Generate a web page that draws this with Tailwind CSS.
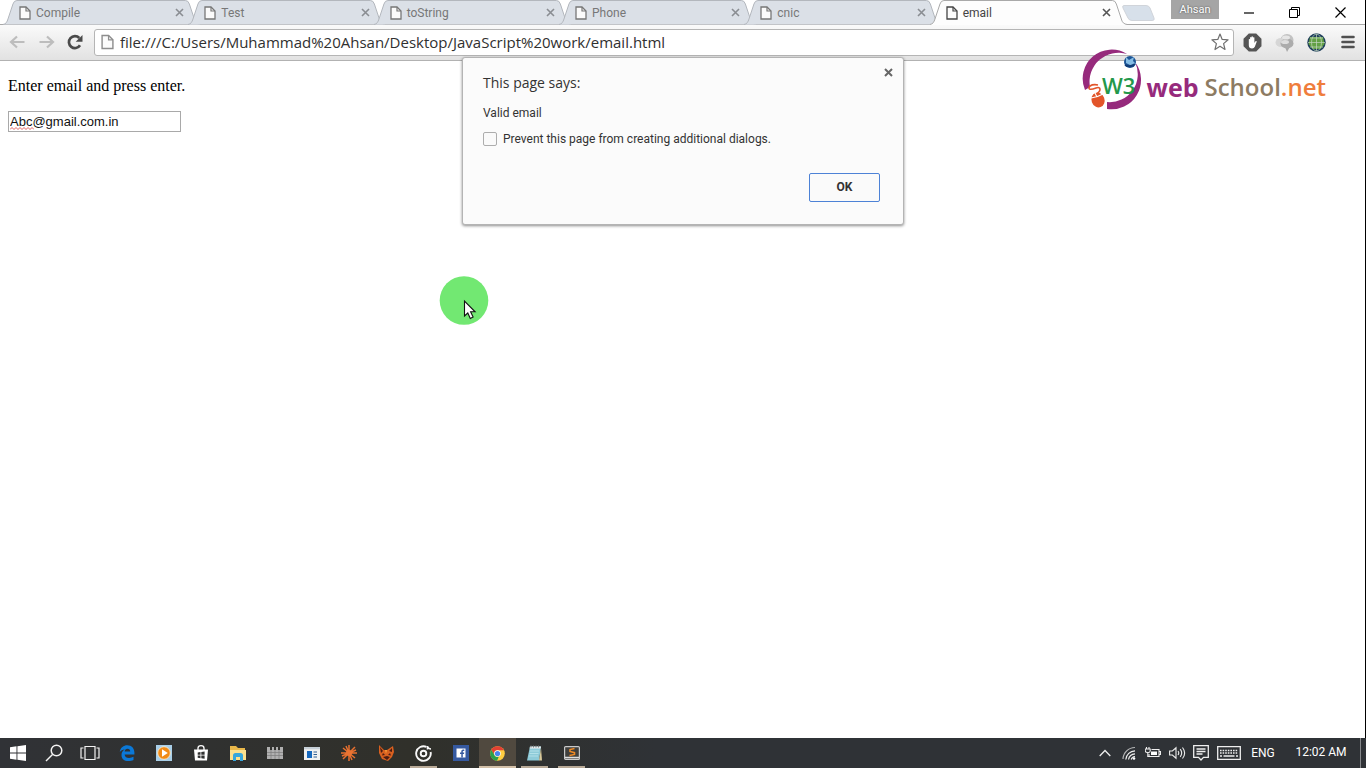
<!DOCTYPE html>
<html lang="en">
<head>
<meta charset="utf-8">
<title>email</title>
<script src="https://cdn.jsdelivr.net/npm/@tailwindcss/browser@4"></script>
</head>
<body class="relative flex h-screen flex-col overflow-hidden bg-white font-['Roboto','Open_Sans',sans-serif] text-[12px] text-[#333]">

<svg class="hidden">
  <symbol id="page" viewBox="0 0 12 14"><path d="M1 1h6l4 4v8H1z" fill="#fbfbfb" stroke="currentColor" stroke-width="1.3"/><path d="M7 1v4h4" fill="none" stroke="currentColor" stroke-width="1.2"/></symbol>
  <symbol id="x" viewBox="0 0 9 9"><path d="M1 1l7 7M8 1l-7 7" stroke="currentColor" stroke-width="1.6"/></symbol>
  <symbol id="tab" viewBox="0 0 198 25" preserveAspectRatio="none"><path d="M0 24.500C3 24 4 22 5 19L10 4Q11 .5 14 .5H183Q186 .5 187 4L192 19Q193 24 198 24.500" fill="#dbe0e7" stroke="#b3b7bd"/></symbol>
  <symbol id="tab-active" viewBox="0 0 198 25" preserveAspectRatio="none"><path d="M0 24.500C3 24 4 22 5 19L10 4Q11 .5 14 .5H183Q186 .5 187 4L192 19Q193 24 198 24.500V26H0z" fill="#fdfdfd"/><path d="M0 24.500C3 24 4 22 5 19L10 4Q11 .5 14 .5H183Q186 .5 187 4L192 19Q193 24 198 24.500" fill="none" stroke="#a9a9a9"/></symbol>
</svg>

<div class="flex min-h-0 flex-1 flex-col border-r border-black">
  <header>
    <div class="flex h-[25px] border-b border-[#a8a8a8] bg-white pr-[2px]">
      <nav class="flex h-[25px] flex-1 pl-[3px] text-[#777]">
        <div class="relative flex flex-1 items-center pl-4 pr-1">
          <svg class="absolute left-0 top-0 h-[25px] w-[calc(100%+12px)]"><use href="#tab"/></svg>
          <svg class="relative mr-[5px] h-[14px] w-3"><use href="#page"/></svg><a href="#" class="relative flex-1">Compile</a>
          <button aria-label="Close Compile" class="relative text-[#8a8d92]"><svg class="size-[9px]"><use href="#x"/></svg></button>
        </div>
        <div class="relative flex flex-1 items-center pl-4 pr-1">
          <svg class="absolute left-0 top-0 h-[25px] w-[calc(100%+12px)]"><use href="#tab"/></svg>
          <svg class="relative mr-[5px] h-[14px] w-3"><use href="#page"/></svg><a href="#" class="relative flex-1">Test</a>
          <button aria-label="Close Test" class="relative text-[#8a8d92]"><svg class="size-[9px]"><use href="#x"/></svg></button>
        </div>
        <div class="relative flex flex-1 items-center pl-4 pr-1">
          <svg class="absolute left-0 top-0 h-[25px] w-[calc(100%+12px)]"><use href="#tab"/></svg>
          <svg class="relative mr-[5px] h-[14px] w-3"><use href="#page"/></svg><a href="#" class="relative flex-1">toString</a>
          <button aria-label="Close toString" class="relative text-[#8a8d92]"><svg class="size-[9px]"><use href="#x"/></svg></button>
        </div>
        <div class="relative flex flex-1 items-center pl-4 pr-1">
          <svg class="absolute left-0 top-0 h-[25px] w-[calc(100%+12px)]"><use href="#tab"/></svg>
          <svg class="relative mr-[5px] h-[14px] w-3"><use href="#page"/></svg><a href="#" class="relative flex-1">Phone</a>
          <button aria-label="Close Phone" class="relative text-[#8a8d92]"><svg class="size-[9px]"><use href="#x"/></svg></button>
        </div>
        <div class="relative flex flex-1 items-center pl-4 pr-1">
          <svg class="absolute left-0 top-0 h-[25px] w-[calc(100%+12px)]"><use href="#tab"/></svg>
          <svg class="relative mr-[5px] h-[14px] w-3"><use href="#page"/></svg><a href="#" class="relative flex-1">cnic</a>
          <button aria-label="Close cnic" class="relative text-[#8a8d92]"><svg class="size-[9px]"><use href="#x"/></svg></button>
        </div>
        <div class="relative flex flex-1 items-center pl-4 pr-1 text-[#444]">
          <svg class="absolute left-0 top-0 h-[25px] w-[calc(100%+12px)]"><use href="#tab-active"/></svg>
          <svg class="relative mr-[5px] h-[14px] w-3"><use href="#page"/></svg><a href="#" class="relative flex-1">email</a>
          <button aria-label="Close email" class="relative text-[#555]"><svg class="size-[9px]"><use href="#x"/></svg></button>
        </div>
      </nav>
      <button aria-label="New tab" class="relative ml-[6px] h-[21px] w-[34px]"><svg class="h-[21px] w-[34px]" viewBox="0 0 34 21"><path d="M3 5.500H25Q28 5.500 29 8L33 18Q34 20.500 31 20.500H11Q8 20.500 7 18L2 8Q1 5.500 3 5.500z" fill="#d7e0ea" stroke="#d0d4da"/></svg></button>
      <button class="ml-4 h-[19px] w-12 bg-[#a5a5a5] text-[11px] leading-[18px] text-white [text-shadow:0_0_2px_#444]">Ahsan</button>
      <div class="ml-[7px] flex text-black">
        <button aria-label="Minimize" class="grid w-[46px] place-items-center"><svg class="size-[11px]" viewBox="0 0 11 11"><path d="M0 6h10" stroke="currentColor" stroke-width="1.2"/></svg></button>
        <button aria-label="Restore" class="grid w-[45px] place-items-center"><svg class="size-[11px]" viewBox="0 0 11 11" fill="none" stroke="currentColor"><path d="M.5 2.500h8v8h-8zM2.500 2.500v-2h8v8h-2"/></svg></button>
        <button aria-label="Close window" class="grid w-[46px] place-items-center"><svg class="size-[11px]" viewBox="0 0 11 11"><path d="M.5.5l10 10M10.500.5l-10 10" stroke="currentColor" stroke-width="1.2"/></svg></button>
      </div>
    </div>

    <div class="flex h-9 items-center border-b border-[#b2b2b2] bg-linear-to-b from-[#fafafa] to-[#e2e2e2] pb-px pl-[9px] pr-[10px]">
      <button aria-label="Back" class="text-[#bdbdbd]"><svg class="h-[14px] w-4" viewBox="0 0 16 14" fill="none" stroke="currentColor" stroke-width="2.200"><path d="M15.500 7H2M8 1.500L2 7l6 5.500"/></svg></button>
      <button aria-label="Forward" class="ml-[14px] text-[#bdbdbd]"><svg class="h-[14px] w-4" viewBox="0 0 16 14" fill="none" stroke="currentColor" stroke-width="2.200"><path d="M.5 7H14M8 1.500L14 7l-6 5.500"/></svg></button>
      <button aria-label="Reload" class="ml-3 text-[#4a4a4a]"><svg class="size-4" viewBox="0 0 16 16"><path d="M13 11.300A6 6 0 1 1 12.300 4" fill="none" stroke="currentColor" stroke-width="2.700"/><path d="M15.500 1v6.800H8.700z" fill="currentColor"/></svg></button>
      <div class="ml-[11px] flex h-[27px] flex-1 items-center rounded-[3px] border border-[#b5b5b5] bg-white pl-[6px] pr-1">
        <svg class="mr-[6px] h-4 w-[13px] text-[#8d8d8d]"><use href="#page"/></svg>
        <input aria-label="Address" class="min-w-0 flex-1 font-['Open_Sans',sans-serif] text-[15px] leading-5 text-[#303030] outline-none" value="file:///C:/Users/Muhammad%20Ahsan/Desktop/JavaScript%20work/email.html">
        <button aria-label="Bookmark"><svg class="size-[18px]" viewBox="0 0 18 18"><path d="M9 1l2.200 5.400 5.900.4-4.500 3.800 1.400 5.900L9 13.300l-5 3.200 1.400-5.900L.9 6.800l5.900-.4z" fill="#fff" stroke="#707070" stroke-width="1.200" stroke-linejoin="round"/></svg></button>
      </div>
      <div class="ml-[9px] flex items-center gap-[13px]">
        <button aria-label="Ad blocker"><svg class="size-[19px]" viewBox="0 0 18 18"><path d="M5.500 .5h7l5 5v7l-5 5h-7l-5-5v-7z" fill="#555"/><path d="M5.500 9.500V6q.6-.8 1.200 0v2.500V4.300q.7-.8 1.300 0v3.500V3.500q.8-.8 1.400 0v4.300V4.300q.8-.7 1.400 0V9.500l1-1.600q1.200-.6 1.200.5l-1.800 4.700q-.7 1.600-2.600 1.600-3 0-3.100-3z" fill="#fff"/></svg></button>
        <button aria-label="Messages"><svg class="size-[19px]" viewBox="0 0 19 19"><ellipse cx="12" cy="7" rx="6.500" ry="6" fill="#c2c2c2"/><path d="M10 14l2 5 4-7z" fill="#a8a8a8"/><ellipse cx="6" cy="9.500" rx="5.500" ry="4.500" fill="#d6d6d6"/><ellipse cx="12" cy="10.500" rx="6.500" ry="5" fill="#acacac"/><ellipse cx="11" cy="4.500" rx="4" ry="2" fill="#e6e6e6"/><ellipse cx="10" cy="9" rx="4" ry="2" fill="#dedede"/></svg></button>
        <button aria-label="Globe"><svg class="size-[19px]" viewBox="0 0 19 19"><circle cx="9.500" cy="9.500" r="9.200" fill="#1f3f5c"/><path d="M3 4h13l1.500 7-4 5h-8l-4-5z" fill="#62a044"/><g fill="none" stroke="#c3d5c0" stroke-width=".7"><path d="M9.500 1v17M1 9.500h17M3 5h13M3 14h13"/><ellipse cx="9.500" cy="9.500" rx="5" ry="8.500"/></g></svg></button>
        <button aria-label="Menu" class="ml-[2px] text-[#505050]"><svg class="h-[14px] w-[14px]" viewBox="0 0 14 14"><path d="M1.500 2h11M1.500 7h11M1.500 12h11" stroke="currentColor" stroke-width="2.600" stroke-linecap="round"/></svg></button>
      </div>
    </div>
  </header>

  <main class="px-2 pt-4">
    <label for="email" class="block font-['Liberation_Serif',serif] text-[16px] leading-[18px] text-black">Enter email and press enter.</label>
    <div class="relative mt-4 w-[173px]">
      <input id="email" class="block h-[21px] w-full border border-[#a9a9a9] px-px font-['Liberation_Sans',sans-serif] text-[13px] text-[#111] outline-none" value="Abc@gmail.com.in" spellcheck="false">
      <svg class="absolute bottom-[2px] left-[2px] h-[3px] w-6" viewBox="0 0 24 3"><path d="M0 2.500l2-2 2 2 2-2 2 2 2-2 2 2 2-2 2 2 2-2 2 2 2-2 2 2" fill="none" stroke="#e05050" stroke-width=".9"/></svg>
    </div>
  </main>
</div>

<section role="dialog" aria-labelledby="says" class="absolute left-1/2 top-[57px] w-[442px] -translate-x-1/2 rounded-[3px] border border-[#b4b4b4] bg-[#fbfbfb] px-5 pb-[22px] pt-4 shadow-[0_1px_3px_rgba(0,0,0,0.45)]">
  <button aria-label="Close dialog" class="absolute right-[10px] top-[10px] text-[#666]"><svg class="size-[9px]" viewBox="0 0 9 9"><path d="M1 1l7 7M8 1l-7 7" stroke="currentColor" stroke-width="2"/></svg></button>
  <h1 id="says" class="font-['Open_Sans',sans-serif] text-[14px] leading-[18px]">This page says:</h1>
  <p class="mt-[13px] leading-4">Valid email</p>
  <label class="mt-[10px] flex items-center leading-4"><input type="checkbox" class="mr-[6px] size-[14px] appearance-none rounded-[2px] border border-[#adadad] bg-[#fafafa]">Prevent this page from creating additional dialogs.</label>
  <div class="mt-[26px] flex justify-end"><button class="mr-[3px] h-[29px] w-[71px] rounded-[2px] border border-[#4d82d6] bg-[#fafafa] pb-px font-bold">OK</button></div>
</section>

<!-- Site watermark -->
<div class="absolute right-[40px] top-[48px] flex items-center">
  <svg class="h-16 w-[66px]" viewBox="0 0 66 64">
    <path d="M4 42A29 29 0 0 1 46 6A29 29 0 0 0 9 39Z" fill="#962a7c"/>
    <path d="M54 14A29.500 29.500 0 0 1 26 61V54A28 28 0 0 0 54 14Z" fill="#962a7c"/>
    <circle cx="49" cy="14" r="6" fill="#1c5596"/><path d="M45 9l3 3 5-3-1 4 3 3-6 1-4-2z" fill="#86bde5"/><path d="M44 17q5 3 10-1" stroke="#123c76" stroke-width="2" fill="none"/>
    <path d="M14 47C21 43 20 38 15 40S6 42 9 38q3-2 8-1" fill="none" stroke="#e2552a" stroke-width="1.600"/>
    <ellipse cx="17" cy="52" rx="6.500" ry="7.500" transform="rotate(-20 17 52)" fill="#e2552a"/><path d="M10 50q7-1 12-4M14 45l2 4" stroke="#fff" stroke-width="1.100" fill="none"/>
    <text x="21" y="46" font-family="Open Sans, sans-serif" font-size="22" font-weight="600" fill="#23984a">W3</text>
  </svg>
  <div class="flex gap-[6px] pt-[14px] font-['Open_Sans',sans-serif] text-[25px] leading-8"><span class="font-bold text-[#962a7c]">web</span><span class="text-[24px] font-semibold text-[#8d7b62]">School<span class="text-[#ef7d3c]">.net</span></span></div>
</div>

<!-- Pointer with highlight -->
<svg class="absolute left-[439px] top-[276px] size-[50px]" viewBox="0 0 50 50"><circle cx="25" cy="24.500" r="24.300" fill="#72e872"/><path d="M25.500 25v15l3.300-3 2.500 5.400 2.800-1.300-2.500-5.300h4.500z" fill="#fff" stroke="#111" stroke-width="1.100"/></svg>

<footer class="flex h-[30px] bg-linear-to-r from-[#303236] from-0% via-[#30302a] via-30% to-[#2f3236] to-48% text-white">
  <button aria-label="Start" class="grid w-9 place-items-center"><svg class="size-4" viewBox="0 0 16 16" fill="#fff"><path d="M0 2.300L6.500 1.300v6.200H0zM7.400 1.200L16 0v7.500H7.400zM0 8.400h6.500v6.300L0 13.700zM7.400 8.400H16V16l-8.600-1.200z"/></svg></button>
  <button aria-label="Search" class="grid w-9 place-items-center"><svg class="size-[18px]" viewBox="0 0 18 18" fill="none" stroke="#f2f2f2" stroke-width="1.500"><circle cx="11.500" cy="6.500" r="5.300"/><path d="M7.500 10.500L1 17"/></svg></button>
  <button aria-label="Task view" class="grid w-9 place-items-center"><svg class="h-4 w-5" viewBox="0 0 20 16" fill="none" stroke="#f2f2f2" stroke-width="1.200"><path d="M5 1.500h10v13H5zM3.500 3H1v10h2.500M16.500 3H19v10h-2.500"/></svg></button>
  <button aria-label="Edge" class="grid w-[37px] place-items-center"><svg class="size-4" viewBox="0 0 16 16"><path d="M.8 7C1.500 2.500 4.600.3 8.200.3c4.600 0 7.200 3.200 7.200 7.200V9.400H5.600c.2 2.500 2 3.500 4.500 3.500 1.700 0 3.200-.4 4.400-1.100v3.100c-1.500.7-3.200 1.100-5.300 1.100-4 0-6.700-2.200-6.700-6.100 0-2.300 1.200-4.300 3.200-5.300C3.600 5 1.800 5.700.8 7zM5.700 6.500h5.500c0-1.600-1-2.700-2.700-2.700S5.900 4.900 5.700 6.500z" fill="#0b78d7"/></svg></button>
  <button aria-label="Media player" class="grid w-[37px] place-items-center"><svg class="size-4" viewBox="0 0 16 16"><path d="M0 0h16v16H0z" fill="#a9cfe8"/><circle cx="8" cy="8" r="6.300" fill="#f18b16" stroke="#fff1d8" stroke-width=".8"/><path d="M6 4.300v7.400L11.800 8z" fill="#fff"/></svg></button>
  <button aria-label="Store" class="grid w-[37px] place-items-center"><svg class="size-4" viewBox="0 0 16 16"><path d="M1 4.500h14l-1 11H2z" fill="#fff"/><path d="M5 5V3q0-2.300 3-2.300T11 3v2" fill="none" stroke="#fff" stroke-width="1.300"/><path d="M4.700 7.400l2.800-.4v2.700H4.700zM8.300 6.900l3.300-.4v3.200H8.300zM4.700 10.500h2.800v2.700l-2.800-.4zM8.300 10.500h3.300v3.300l-3.300-.5z" fill="#303131"/></svg></button>
  <button aria-label="File Explorer" class="grid w-[37px] place-items-center"><svg class="h-4 w-[18px]" viewBox="0 0 18 16"><path d="M1 1h6l2 2h7v4H1z" fill="#e9b84a"/><path d="M1 5h16v10H1z" fill="#fbe08d"/><path d="M4 16V10.500Q4 8 6.500 8h5Q14 8 14 10.500V16h-3v-4H7v4z" fill="#36a6dc"/></svg></button>
  <button aria-label="Keyboard tool" class="grid w-[37px] place-items-center"><svg class="h-[14px] w-4" viewBox="0 0 16 14"><path d="M0 1h3v3h2V1h2v3h2V1h2v3h2V1h3v12H0z" fill="#b0b0b0"/><path d="M0 6.500h16M0 9.500h16M4 4v9M8 4v9M12 4v9" stroke="#7c7c7c" stroke-width=".7"/></svg></button>
  <button aria-label="Reader" class="grid w-[37px] place-items-center"><svg class="h-[13px] w-4" viewBox="0 0 16 13"><path d="M0 0h16v13H0z" fill="#f1f1f1"/><path d="M0 0h16v2.300H0z" fill="#c6d0d8"/><path d="M3 4h5v7H3z" fill="#1668be"/><path d="M9.500 5H13M9.500 7.500H13M9.500 10H13" stroke="#315f93"/></svg></button>
  <button aria-label="Starburst" class="grid w-[37px] place-items-center"><svg class="size-4" viewBox="0 0 16 16"><g stroke="#e8702f" stroke-width="1.500"><path d="M8 0v16M0 8h16M2 3l12 10M14 2L2 14M5 1l6 14M1 11l14-6"/></g><circle cx="8" cy="8" r="3" fill="#ea7433"/></svg></button>
  <button aria-label="Fox" class="grid w-[37px] place-items-center"><svg class="size-4" viewBox="0 0 16 16"><path d="M1 0l5 5h3l6-4 1 6-2 5-4 4-6-2-3-6z" fill="#d9601f"/><path d="M2 2l3 4-2 2zM14 3l-3 3 3 1zM5 8l2 2-3 .5zM12 8l-2 2 3 .5zM5 12l4-1 3 1-3 3z" fill="#4a1d14"/><path d="M7 5l1 4 1-4z" fill="#f49b39"/></svg></button>
  <button aria-label="Groove" class="ml-[6px] mr-[5px] grid w-[27px] place-items-center border-b-2 border-[#b9aa97]"><svg class="mt-[2px] size-[17px]" viewBox="0 0 17 17" fill="none" stroke="#f8f8f8"><path d="M11.500 1.900A7.300 7.300 0 1 0 15.600 7" stroke-width="1.900"/><circle cx="8.500" cy="8.500" r="2.800" stroke-width="1.900"/><path d="M12.500 1v3.500M12.500 1.500q1 2.500 3.500 2.500" stroke-width="1.600"/></svg></button>
  <button aria-label="Facebook" class="grid w-[37px] place-items-center"><svg class="size-4" viewBox="0 0 16 16"><path d="M0 0h16v16H0z" fill="#3559a0"/><path d="M3.500 3.500h9v9h-9z" fill="#fff"/><path d="M8.300 12.500V9H7V7.500h1.300V6.300Q8.300 4.500 10 4.500h1.300V6h-1q-.5 0-.5.6v.9h1.500L11 9H9.800v3.500z" fill="#3559a0"/></svg></button>
  <button aria-label="Chrome" class="grid w-[37px] place-items-center border-b-2 border-[#d3c0a8] bg-[#50493f]"><svg class="mt-[2px] size-[15px]" viewBox="0 0 16 16"><circle cx="8" cy="8" r="7.800" fill="#ffcd41"/><path d="M1.200 4.100A7.800 7.800 0 0 1 14.900 4.500H8A3.600 3.600 0 0 0 4.700 9.500z" fill="#e34133"/><path d="M1.200 4.100L4.800 9.700A3.600 3.600 0 0 0 9.500 11.300L7.500 15.800A7.800 7.800 0 0 1 1.200 4.100z" fill="#2ba04b"/><circle cx="8" cy="8" r="3.500" fill="#fff"/><circle cx="8" cy="8" r="2.800" fill="#4886ec"/></svg></button>
  <button aria-label="Notepad" class="mx-[5px] grid w-[27px] place-items-center border-b-2 border-[#b9aa97]"><svg class="mt-[2px] h-4 w-[15px]" viewBox="0 0 15 16"><path d="M3 1.500h11L12 15.500H0z" fill="#8ecbd9"/><path d="M3 1.500h11l-.3 2H2.700z" fill="#e9eef0"/><path d="M4 .5v2M6.500 .5v2M9 .5v2M11.500 .5v2" stroke="#777"/><path d="M3 6h9M2.500 8.500h9M2 11h9" stroke="#bce5ec" stroke-width=".8"/><path d="M14 3l1 12.500h-3z" fill="#d8c99a"/></svg></button>
  <button aria-label="Sublime Text" class="mx-[5px] grid w-[27px] place-items-center border-b-2 border-[#b9aa97]"><svg class="mt-[2px] h-[14px] w-4" viewBox="0 0 16 14"><rect x=".6" y=".6" width="14.800" height="12.800" rx="1" fill="#3f3f3d" stroke="#c9c9c9" stroke-width="1.200"/><path d="M1 11.500h14" stroke="#ddd" stroke-width="1.500"/><path d="M10.500 2.500L6 3.500v2l4.500 1.200V8.500L5.500 9.500" fill="none" stroke="#ee8a25" stroke-width="1.500"/></svg></button>

  <div class="ml-auto flex items-center pr-[5px]">
    <button aria-label="Show hidden icons" class="grid w-6 place-items-center"><svg class="h-2 w-3" viewBox="0 0 12 8" fill="none" stroke="#eee" stroke-width="1.300"><path d="M.7 7L6 1.500 11.300 7"/></svg></button>
    <button aria-label="Network" class="grid w-6 place-items-center"><svg class="size-[14px]" viewBox="0 0 14 14" fill="none" stroke="#eee" stroke-width="1.200"><path d="M1 13A12 12 0 0 1 13 1.500" opacity=".7"/><path d="M3.800 13.500A9.500 9.500 0 0 1 13 4.800M6.500 13.500A7 7 0 0 1 13 7.800M9.200 13.500A4 4 0 0 1 13 10.500"/><circle cx="12" cy="12.500" r="1.300" fill="#fff" stroke="none"/></svg></button>
    <button aria-label="Battery" class="grid w-6 place-items-center"><svg class="h-3 w-4" viewBox="0 0 16 12"><path d="M6.500 2.500H14v7H4V7M14 4.500h1.500v3H14" fill="none" stroke="#eee" stroke-width="1.100"/><path d="M6 4.500h6v3.500H6z" fill="#fff"/><path d="M1.500 0v2M4 0v2M.3 2h4.900v2Q5 5.500 3.500 5.500h-1Q.5 5.500 .3 4zM2.800 5v4.500H4" fill="none" stroke="#eee" stroke-width="1.100"/></svg></button>
    <button aria-label="Volume" class="grid w-6 place-items-center"><svg class="h-[14px] w-[17px]" viewBox="0 0 17 14" fill="none" stroke="#eee" stroke-width="1.100"><path d="M.6 5h2.800L7 1.800v10.400L3.400 9H.6zM9 5q1.500 2 0 4M11.200 3.200q3 3.800 0 7.600M13.500 1.500q4.300 5.500 0 11"/></svg></button>
    <button aria-label="Notifications" class="grid w-6 place-items-center"><svg class="size-4" viewBox="0 0 16 16" fill="none" stroke="#eee" stroke-width="1.300"><path d="M.7 .7h14.600v11.600H10.500L8 15l-2.500-2.700H.7zM3.500 4h9M3.500 6.500h9M3.500 9h6"/></svg></button>
    <button aria-label="Touch keyboard" class="grid w-[31px] place-items-center"><svg class="h-[14px] w-6" viewBox="0 0 24 14" fill="none" stroke="#eee" stroke-width="1.300"><path d="M.7 .7h22.600v12.600H.7z"/><path d="M3 4.500h18M3 7h18" stroke-dasharray="1.600 1"/><path d="M3 10h2M6.500 10h11M19 10h2"/></svg></button>
    <button class="w-[38px]">ENG</button>
    <button class="w-[78px] pb-[2px]">12:02 AM</button>
    <span class="h-[30px] w-px bg-[#85878a]"></span>
  </div>
</footer>
</body>
</html>
